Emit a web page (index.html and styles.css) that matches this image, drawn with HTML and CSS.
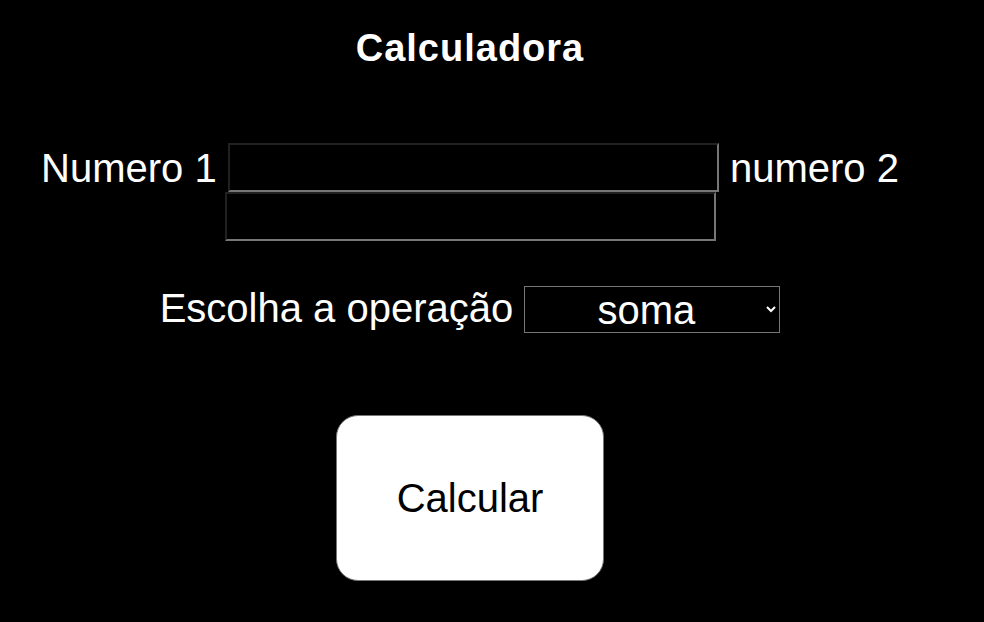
FILE: index.html
```html
<!DOCTYPE html>
<html lang="pt">
<head>
<meta charset="utf-8">
<title>Calculadora</title>
<link rel="stylesheet" href="styles.css">
</head>
<body>
<main class="page">
  <h1 class="title">Calculadora</h1>
  <div class="numbers">
    <label for="n1">Numero 1</label>
    <input id="n1" class="num-input" type="text">
    <label for="n2">numero 2</label>
    <input id="n2" class="num-input" type="text">
  </div>
  <div class="operation">
    <label for="op">Escolha a operação</label>
    <select id="op" class="op-select">
      <option>soma</option>
      <option>subtração</option>
      <option>multiplicação</option>
      <option>divisão</option>
    </select>
  </div>
  <div class="actions">
    <button class="calc-btn" type="button">Calcular</button>
  </div>
</main>
</body>
</html>
```
FILE: styles.css
```css
html, body {
  margin: 0;
  padding: 0;
  background: #000;
}

body {
  color: #fff;
  font-family: "Liberation Sans", Arial, sans-serif;
  font-size: 40px;
}

.page {
  width: 940px;
  text-align: center;
}

.title {
  margin: 0;
  padding-top: 28px;
  font-size: 38px;
  line-height: 40px;
  font-weight: bold;
  letter-spacing: 1px;
}

.numbers {
  margin-top: 75px;
}

.num-input {
  box-sizing: border-box;
  width: 491px;
  height: 49px;
  padding: 1px 2px;
  border: 2px inset #767676;
  background: #000;
  color: #fff;
  font-family: "Liberation Sans", Arial, sans-serif;
  font-size: 36px;
  vertical-align: 2px;
}

.operation {
  margin-top: 45px;
}

.op-select {
  box-sizing: border-box;
  width: 256px;
  height: 47px;
  border: 1px solid #767676;
  border-radius: 0;
  background: #000;
  color: #fff;
  font-family: "Liberation Sans", Arial, sans-serif;
  font-size: 40px;
  text-align: center;
  text-align-last: center;
  vertical-align: -2px;
}

.actions {
  margin-top: 82px;
}

.calc-btn {
  box-sizing: border-box;
  width: 268px;
  height: 166px;
  border: 1px solid #767676;
  border-radius: 22px;
  background: #fff;
  color: #000;
  font-family: "Liberation Sans", Arial, sans-serif;
  font-size: 40px;
}
```
